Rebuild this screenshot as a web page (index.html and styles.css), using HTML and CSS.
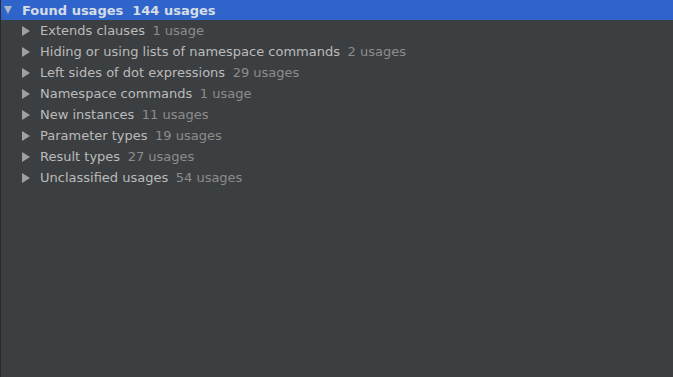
FILE: index.html
```html
<!DOCTYPE html>
<html>
<head>
<meta charset="utf-8">
<link rel="stylesheet" href="styles.css">
</head>
<body>
<div class="panel">
  <div class="row root">
    <span class="arrow down"></span>
    <span class="label">Found usages</span><span class="count">144 usages</span>
  </div>
  <div class="row child"><span class="arrow right"></span><span class="label">Extends clauses</span><span class="count">1 usage</span></div>
  <div class="row child"><span class="arrow right"></span><span class="label">Hiding or using lists of namespace commands</span><span class="count">2 usages</span></div>
  <div class="row child"><span class="arrow right"></span><span class="label">Left sides of dot expressions</span><span class="count">29 usages</span></div>
  <div class="row child"><span class="arrow right"></span><span class="label">Namespace commands</span><span class="count">1 usage</span></div>
  <div class="row child"><span class="arrow right"></span><span class="label">New instances</span><span class="count">11 usages</span></div>
  <div class="row child"><span class="arrow right"></span><span class="label">Parameter types</span><span class="count">19 usages</span></div>
  <div class="row child"><span class="arrow right"></span><span class="label">Result types</span><span class="count">27 usages</span></div>
  <div class="row child"><span class="arrow right"></span><span class="label">Unclassified usages</span><span class="count">54 usages</span></div>
</div>
</body>
</html>
```
FILE: styles.css
```css
html, body {
  margin: 0;
  padding: 0;
  height: 100%;
  background: #3c3f41;
}
.panel {
  height: 377px;
  width: 673px;
  box-sizing: border-box;
  border-left: 1px solid #2b2b2b;
  background: #3c3f41;
  font-family: "DejaVu Sans", sans-serif;
  font-size: 13px;
  color: #bbbbbb;
}
.row {
  display: flex;
  align-items: center;
  height: 21px;
  white-space: nowrap;
}
.root {
  height: 20px;
  background: #2f65ca;
  padding-left: 3px;
  font-weight: bold;
  color: #d6dce8;
}
.root .count {
  color: #d6dce8;
  margin-left: 9px;
}
.child {
  padding-left: 21px;
}
.arrow {
  display: inline-block;
  width: 0;
  height: 0;
  margin-right: 10px;
}
.arrow.down {
  border-left: 4.5px solid transparent;
  border-right: 4.5px solid transparent;
  border-top: 8px solid #a9b7c6;
  margin-right: 10px;
}
.arrow.right {
  border-top: 5px solid transparent;
  border-bottom: 5px solid transparent;
  border-left: 8px solid #a0a0a0;
}
.count {
  margin-left: 7.5px;
  color: #8c8c8c;
}
```
